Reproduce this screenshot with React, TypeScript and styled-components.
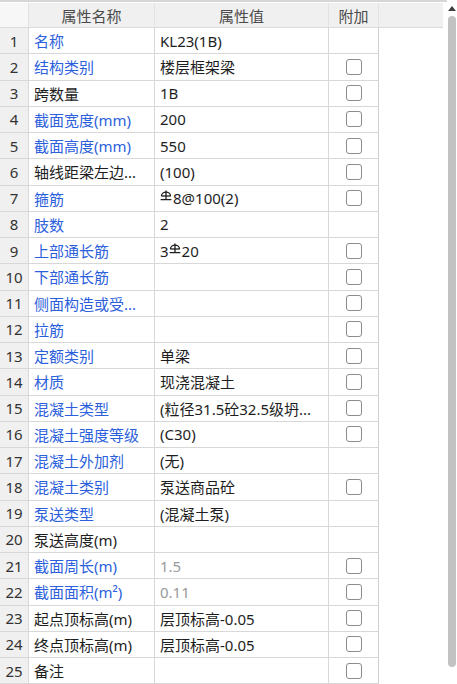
import React from "react";
import styled, { createGlobalStyle } from "styled-components";

const Global = createGlobalStyle`
  html, body { margin: 0; padding: 0; background: #fff; }
  body { font-family: "Noto Sans", "Noto Sans CJK SC", sans-serif; }
  * { box-sizing: border-box; }
`;

const Page = styled.div`
  width: 457px;
  height: 684px;
  display: flex;
  overflow: hidden;
  background: #fff;
`;

const TableArea = styled.div`
  width: 447px;
  border-top: 2px solid #d6d6d6;
  padding-top: 1px;
`;

const Grid = styled.div`
  display: grid;
  grid-template-columns: 29px 126px 174px 50px 64px;
`;

const HeadCell = styled.div<{ $blank?: boolean; $last?: boolean }>`
  height: 25px;
  display: flex;
  align-items: center;
  justify-content: center;
  background: ${(p) => (p.$blank ? "#f7f7f7" : "#f0f0f0")};
  border-right: ${(p) => (p.$last ? "none" : "1px solid #e2e2e2")};
  border-bottom: 1px solid #dadada;
  color: #4a4a4a;
  font-size: 15px;
  font-family: "Noto Sans CJK SC", sans-serif;
`;

const NumCell = styled.div`
  height: 26.25px;
  display: flex;
  align-items: center;
  justify-content: center;
  background: #f0f0f0;
  border-right: 1px solid #d8d8d8;
  border-bottom: 1px solid #d8d8d8;
  color: #333;
  font-size: 15px;
`;

const NameCell = styled.div<{ $blue: boolean }>`
  height: 26.25px;
  display: flex;
  align-items: center;
  padding-left: 5px;
  border-right: 1px solid #d8d8d8;
  border-bottom: 1px solid #d8d8d8;
  color: ${(p) => (p.$blue ? "#2c5fdc" : "#1e1e1e")};
  font-size: 15px;
  white-space: nowrap;
  overflow: hidden;
`;

const ValueCell = styled.div<{ $muted: boolean }>`
  height: 26.25px;
  display: flex;
  align-items: center;
  padding-left: 5px;
  border-right: 1px solid #d8d8d8;
  border-bottom: 1px solid #d8d8d8;
  color: ${(p) => (p.$muted ? "#9a9a9a" : "#1e1e1e")};
  font-size: 15px;
  white-space: nowrap;
  overflow: hidden;
`;

const AddCell = styled.div`
  height: 26.25px;
  display: flex;
  align-items: center;
  justify-content: center;
  border-right: 1px solid #d0d0d0;
  border-bottom: 1px solid #d8d8d8;
`;

const Filler = styled.div`
  height: 26.25px;
`;

const Box = styled.div`
  width: 16px;
  height: 16px;
  border: 1.5px solid #8c8c8c;
  border-radius: 3px;
  background: #fff;
`;

const Scroll = styled.div`
  position: relative;
  width: 10px;
  height: 684px;
`;

const Arrow = styled.div`
  position: absolute;
  left: 1px;
  top: 6px;
  width: 0;
  height: 0;
  border-left: 4px solid transparent;
  border-right: 4px solid transparent;
  border-bottom: 5px solid #404040;
`;

const Thumb = styled.div`
  position: absolute;
  left: 1px;
  top: 16px;
  width: 8px;
  height: 651px;
  border-radius: 4px;
  background: #c2c2c2;
`;

const SteelSvg = styled.svg`
  margin-right: 1px;
  margin-top: -3px;
  flex: none;
`;

const Steel = () => (
  <SteelSvg width="12" height="13" viewBox="0 0 12 13">
    <path d="M6 0.5 V9.5" stroke="#1e1e1e" strokeWidth="1.3" fill="none" />
    <path d="M1.5 6 A4.5 3.8 0 0 1 10.5 6" stroke="#1e1e1e" strokeWidth="1.3" fill="none" />
    <path d="M1.2 6 H10.8" stroke="#1e1e1e" strokeWidth="1.3" fill="none" />
    <path d="M0.6 9.6 H11.4" stroke="#1e1e1e" strokeWidth="1.3" fill="none" />
  </SteelSvg>
);

type Row = { name: string; blue: boolean; value: React.ReactNode; muted?: boolean; box: boolean };

const rows: Row[] = [
  { name: "名称", blue: true, value: "KL23(1B)", box: false },
  { name: "结构类别", blue: true, value: "楼层框架梁", box: true },
  { name: "跨数量", blue: false, value: "1B", box: true },
  { name: "截面宽度(mm)", blue: true, value: "200", box: true },
  { name: "截面高度(mm)", blue: true, value: "550", box: true },
  { name: "轴线距梁左边...", blue: false, value: "(100)", box: true },
  { name: "箍筋", blue: true, value: <><Steel />8@100(2)</>, box: true },
  { name: "肢数", blue: true, value: "2", box: false },
  { name: "上部通长筋", blue: true, value: <>3<Steel />20</>, box: true },
  { name: "下部通长筋", blue: true, value: "", box: true },
  { name: "侧面构造或受...", blue: true, value: "", box: true },
  { name: "拉筋", blue: true, value: "", box: true },
  { name: "定额类别", blue: true, value: "单梁", box: true },
  { name: "材质", blue: true, value: "现浇混凝土", box: true },
  { name: "混凝土类型", blue: true, value: "(粒径31.5砼32.5级坍...", box: true },
  { name: "混凝土强度等级", blue: true, value: "(C30)", box: true },
  { name: "混凝土外加剂", blue: true, value: "(无)", box: false },
  { name: "混凝土类别", blue: true, value: "泵送商品砼", box: true },
  { name: "泵送类型", blue: true, value: "(混凝土泵)", box: false },
  { name: "泵送高度(m)", blue: false, value: "", box: false },
  { name: "截面周长(m)", blue: true, value: "1.5", muted: true, box: true },
  { name: "截面面积(m²)", blue: true, value: "0.11", muted: true, box: true },
  { name: "起点顶标高(m)", blue: false, value: "层顶标高-0.05", box: true },
  { name: "终点顶标高(m)", blue: false, value: "层顶标高-0.05", box: true },
  { name: "备注", blue: false, value: "", box: true },
];

export default function App() {
  return (
    <>
      <Global />
      <Page>
        <TableArea>
          <Grid>
            <HeadCell $blank />
            <HeadCell>属性名称</HeadCell>
            <HeadCell>属性值</HeadCell>
            <HeadCell>附加</HeadCell>
            <HeadCell $last />
            {rows.map((r, i) => (
              <React.Fragment key={i}>
                <NumCell>{i + 1}</NumCell>
                <NameCell $blue={r.blue}>{r.name}</NameCell>
                <ValueCell $muted={!!r.muted}>{r.value}</ValueCell>
                <AddCell>{r.box ? <Box /> : null}</AddCell>
                <Filler />
              </React.Fragment>
            ))}
          </Grid>
        </TableArea>
        <Scroll>
          <Arrow />
          <Thumb />
        </Scroll>
      </Page>
    </>
  );
}
